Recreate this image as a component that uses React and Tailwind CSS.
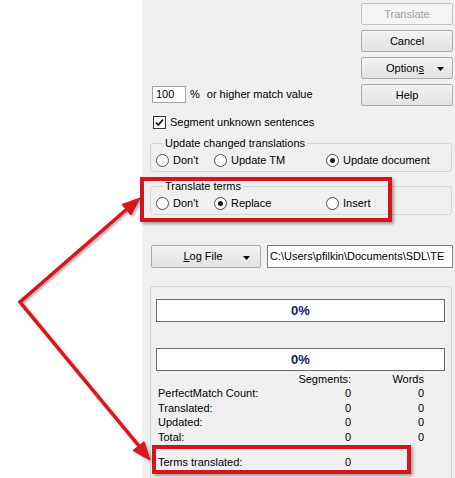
import React from 'react'

const font = { fontFamily: '"Liberation Sans", Arial, sans-serif' }

function Caret() {
  return (
    <svg width="7" height="4" viewBox="0 0 7 4" className="shrink-0">
      <path d="M0 0h7L3.5 4z" fill="#000" />
    </svg>
  )
}

function WinButton({ children, disabled, className = '' }) {
  return (
    <div
      className={`flex h-[22px] items-center justify-center rounded-[2px] border ${
        disabled
          ? 'border-[#c4c4c4] bg-[#f4f4f4] text-[#a0a0a0]'
          : 'border-[#acacac] bg-gradient-to-b from-[#f3f3f3] to-[#e2e2e2] text-black'
      } ${className}`}
    >
      {children}
    </div>
  )
}

function Radio({ checked, label, className = '' }) {
  return (
    <div className={`flex items-center gap-[4px] ${className}`}>
      <span className="flex h-[13px] w-[13px] items-center justify-center rounded-full border border-[#4d4d4d] bg-white">
        {checked ? <span className="h-[5px] w-[5px] rounded-full bg-[#1a1a1a]" /> : null}
      </span>
      <span>{label}</span>
    </div>
  )
}

function Progress() {
  return (
    <div className="flex h-[23px] items-center justify-center border border-[#6b6b6b] bg-white text-[13px] font-bold text-[#141480]">
      0%
    </div>
  )
}

function StatRow({ label, seg, words }) {
  return (
    <div className="flex h-[14.5px] items-center">
      <span className="w-[133px]">{label}</span>
      <span className="w-[60px] text-right">{seg}</span>
      <span className="w-[73px] text-right">{words}</span>
    </div>
  )
}

export default function App() {
  return (
    <div className="relative flex h-[478px] w-[455px] overflow-hidden bg-white text-[11px] leading-[13px] text-black" style={font}>
      <div className="w-[142px] shrink-0" />

      <div className="w-[313px] min-w-0 shrink-0 bg-[#f0f0f0]">
        {/* top: match value + action buttons */}
        <div className="flex justify-between pr-[2px] pt-[3px]">
          <div className="mt-[80px] flex items-center pl-[10px]">
            <div className="flex h-[17px] w-[34px] items-center border border-[#a5a5a5] bg-white pl-[3px]">100</div>
            <span className="ml-[4px]">%</span>
            <span className="ml-[7px]">or higher match value</span>
          </div>
          <div className="flex w-[92px] flex-col gap-[5px]">
            <WinButton disabled>Translate</WinButton>
            <WinButton>Cancel</WinButton>
            <WinButton className="relative">
              <span className="ml-[-4px]">
                Option<u>s</u>
              </span>
              <span className="absolute right-[8px] top-[9px]">
                <Caret />
              </span>
            </WinButton>
            <WinButton>Help</WinButton>
          </div>
        </div>

        <div className="mt-[10px] flex items-center gap-[4px] pl-[11px]">
          <span className="flex h-[13px] w-[13px] items-center justify-center border border-[#333] bg-white">
            <svg width="9" height="9" viewBox="0 0 9 9">
              <path d="M1 4.5l2.3 2.5L8 1.5" fill="none" stroke="#111" strokeWidth="1.8" />
            </svg>
          </span>
          <span>Segment unknown sentences</span>
        </div>

        <fieldset className="ml-[8px] mr-[3px] mt-[8px] min-w-0 rounded-[3px] border border-[#d6d6d6] pb-[4px] pl-[5px]">
          <legend className="ml-[7px] px-[2px]">Update changed translations</legend>
          <div className="mt-[4px] flex items-center">
            <Radio label="Don't" className="w-[58px]" />
            <Radio label="Update TM" className="w-[112px]" />
            <Radio checked label="Update document" />
          </div>
        </fieldset>

        <fieldset className="ml-[8px] mr-[3px] mt-[8px] min-w-0 rounded-[3px] border border-[#d6d6d6] pb-[4px] pl-[5px]">
          <legend className="ml-[7px] px-[2px]">Translate terms</legend>
          <div className="mt-[4px] flex items-center">
            <Radio label="Don't" className="w-[58px]" />
            <Radio checked label="Replace" className="w-[112px]" />
            <Radio label="Insert" />
          </div>
        </fieldset>

        <div className="mt-[30px] flex h-[23px] items-stretch pl-[9px] pr-[2px]">
          <WinButton className="relative h-[23px] w-[110px] shrink-0">
            <span className="ml-[-6px]">
              <u>L</u>og File
            </span>
            <span className="absolute right-[10px] top-[10px]">
              <Caret />
            </span>
          </WinButton>
          <div className="ml-[6px] flex min-w-0 flex-1 items-center overflow-hidden whitespace-nowrap border border-[#7f7f7f] bg-white pl-[2px]">
            C:\Users\pfilkin\Documents\SDL\TE
          </div>
        </div>

        <div className="ml-[8px] mr-[3px] mt-[18px] h-[200px] rounded-[3px] border border-[#d6d6d6] pl-[5px] pr-[6px] pt-[12px]">
          <Progress />
          <div className="mt-[26px]">
            <Progress />
          </div>
          <div className="mt-[1px] pl-[2px]">
            <StatRow label="" seg="Segments:" words="Words" />
            <StatRow label="PerfectMatch Count:" seg="0" words="0" />
            <StatRow label="Translated:" seg="0" words="0" />
            <StatRow label="Updated:" seg="0" words="0" />
            <StatRow label="Total:" seg="0" words="0" />
            <div className="mt-[11px]">
              <StatRow label="Terms translated:" seg="0" words="" />
            </div>
          </div>
        </div>
      </div>

      {/* annotation overlay */}
      <div className="pointer-events-none absolute left-[140px] top-[177px] h-[45px] w-[252px] border-[4px] border-[#d8131b] shadow-[2px_2px_3px_rgba(0,0,0,0.35)]" />
      <div className="pointer-events-none absolute left-[152px] top-[445px] h-[29px] w-[259px] border-[4px] border-[#d8131b] shadow-[2px_2px_3px_rgba(0,0,0,0.35)]" />
      <svg className="pointer-events-none absolute left-0 top-0" width="455" height="478" viewBox="0 0 455 478">
        <defs>
          <filter id="sh" x="-10%" y="-10%" width="130%" height="130%">
            <feDropShadow dx="1.5" dy="1.5" stdDeviation="1.2" floodColor="#000" floodOpacity="0.35" />
          </filter>
        </defs>
        <g filter="url(#sh)" fill="#d8131b" stroke="#d8131b">
          <polyline points="127,209 20,302 139,446" fill="none" strokeWidth="3.5" strokeLinejoin="miter" />
          <polygon points="140,198 131,215 122,204.5" strokeWidth="1" />
          <polygon points="150,460 133,450.5 144,441.7" strokeWidth="1" />
        </g>
      </svg>
    </div>
  )
}
